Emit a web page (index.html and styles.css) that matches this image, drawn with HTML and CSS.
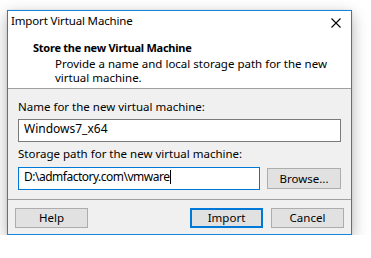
FILE: index.html
```html
<!DOCTYPE html>
<html lang="en">
<head>
    <meta charset="UTF-8">
    <title>Import Virtual Machine</title>
    <link rel="stylesheet" href="styles.css">
</head>
<body>
    <div class="dialog">
        <div class="title-bar">
            <span class="title">Import Virtual Machine</span>
            <svg class="close-icon" width="10" height="10" viewBox="0 0 10 10">
                <path d="M0.5 0.5L9.5 9.5M9.5 0.5L0.5 9.5" stroke="#000" stroke-width="1.1" fill="none"/>
            </svg>
        </div>
        <div class="page-header">
            <h2>Store the new Virtual Machine</h2>
            <p>Provide a name and local storage path for the new<br>virtual machine.</p>
        </div>
        <div class="page-body">
            <label class="field-label">Name for the new virtual machine:</label>
            <div class="textbox">Windows7_x64</div>
            <label class="field-label second">Storage path for the new virtual machine:</label>
            <div class="path-row">
                <div class="textbox focused">D:\admfactory.com\vmware<span class="caret"></span></div>
                <button class="btn browse">Browse...</button>
            </div>
        </div>
        <div class="dialog-footer">
            <button class="btn">Help</button>
            <button class="btn primary">Import</button>
            <button class="btn">Cancel</button>
        </div>
    </div>
</body>
</html>
```

FILE: styles.css
```css
body {
    margin: 0;
    background: #ffffff;
    font-family: "Noto Sans", "Open Sans", sans-serif;
    font-size: 11.5px;
    line-height: 14px;
    color: #000;
}

.dialog {
    margin: 10px 0 0 7px;
    width: 345px;
    box-sizing: border-box;
    border: 1px solid #1883d7;
    background: #f0f0f0;
    box-shadow: 0 5px 15px rgba(0,0,0,0.3), 0 0 2px rgba(0,0,0,0.1);
}

.title-bar {
    background: white;
    height: 24px;
    padding-top: 3px;
    padding-left: 3px;
    box-sizing: border-box;
    display: flex;
    align-items: flex-start;
    justify-content: space-between;
}

.title {
    letter-spacing: -0.15px;
}

.close-icon {
    margin: 4px 10px 0 0;
}

.page-header {
    background: white;
    padding: 6px 0 3px 25px;
    border-bottom: 1px solid #a0a0a0;
}

.page-header h2 {
    margin: 0;
    font-size: 11px;
    font-weight: bold;
    letter-spacing: -0.25px;
}

.page-header p {
    margin: 2px 0 0 22px;
}

.page-body {
    padding: 11px 10px 9px;
}

.field-label {
    display: block;
}

.field-label.second {
    margin-top: 5px;
}

.textbox {
    margin-top: 5px;
    height: 23px;
    box-sizing: border-box;
    border: 1px solid #7a7a7a;
    background: white;
    padding: 1px 5px 0;
    font-size: 12px;
    line-height: 16px;
    white-space: nowrap;
}

.textbox.focused {
    border-color: #0078d7;
    letter-spacing: -0.5px;
}

.caret {
    display: inline-block;
    width: 1px;
    height: 14px;
    margin-left: 1px;
    background: #000;
    vertical-align: -3px;
}

.path-row {
    margin-top: 6px;
    display: flex;
    align-items: center;
}

.path-row .textbox {
    margin-top: 0;
    width: 242px;
}

.btn {
    font-family: inherit;
    font-size: 11.5px;
    color: #000;
    background: #e1e1e1;
    border: 1px solid #adadad;
    width: 73px;
    height: 20px;
    padding: 0;
    box-sizing: border-box;
    line-height: 16px;
}

.btn.browse {
    width: 74px;
    height: 21px;
    margin-left: 7px;
}

.btn.primary {
    border: 2px solid #0078d7;
    margin-left: auto;
    margin-right: 8px;
}

.dialog-footer {
    border-top: 1px solid #a0a0a0;
    padding: 8px 7px 6px;
    display: flex;
}
```
